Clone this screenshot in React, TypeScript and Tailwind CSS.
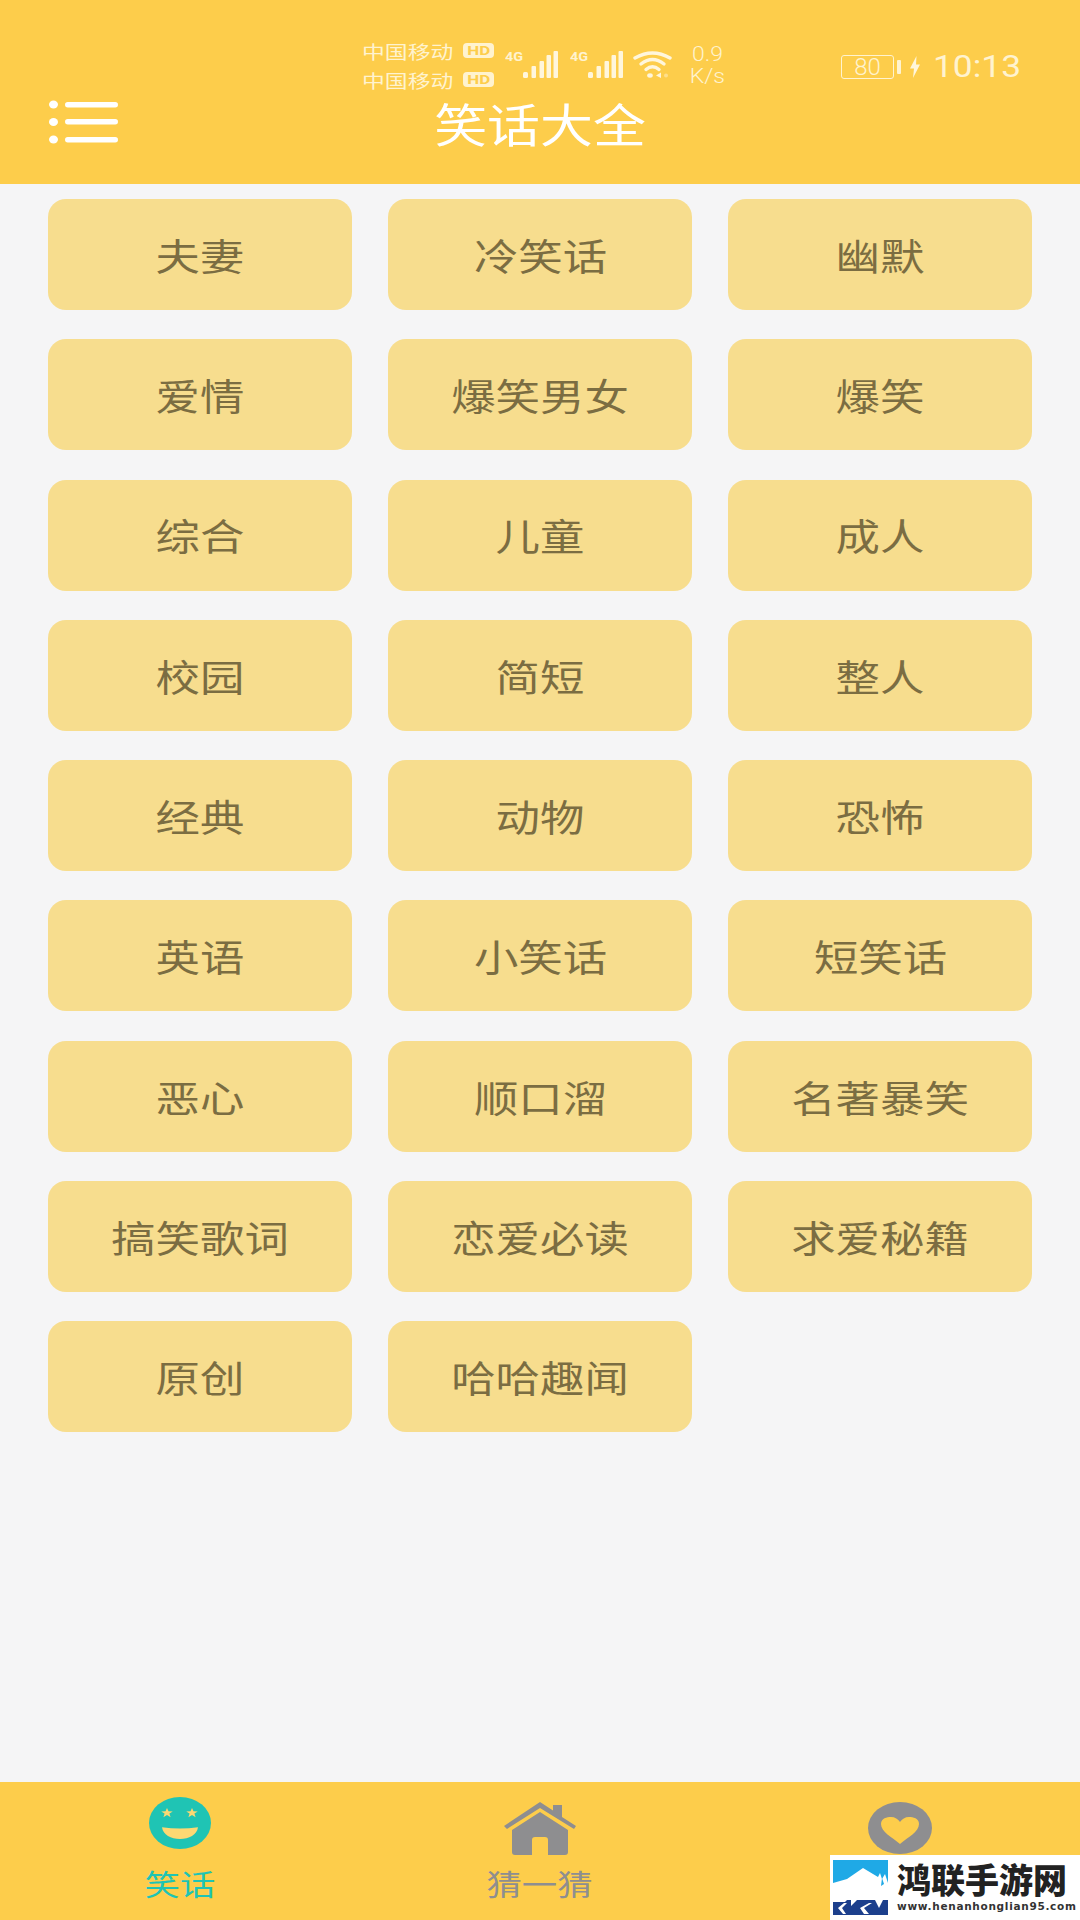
import React from 'react'

const cjk = "font-['Noto_Sans_CJK_SC','Noto_Sans',sans-serif]"

const items = [
  '夫妻', '冷笑话', '幽默',
  '爱情', '爆笑男女', '爆笑',
  '综合', '儿童', '成人',
  '校园', '简短', '整人',
  '经典', '动物', '恐怖',
  '英语', '小笑话', '短笑话',
  '恶心', '顺口溜', '名著暴笑',
  '搞笑歌词', '恋爱必读', '求爱秘籍',
  '原创', '哈哈趣闻',
]

// Signal bars with the small 4G tag
const Signal = () => (
  <div className="flex items-start w-[53px] h-[27px]">
    <span className="block w-[18px] mt-[1px] text-[12px] leading-[11px] font-bold text-[#fff3cf] font-['Roboto',sans-serif] origin-left scale-x-[1.2]">4G</span>
    <svg width="35" height="27" viewBox="0 0 35 27" fill="#fff6dc">
      <rect x="0" y="21" width="5" height="6" rx="1.5" />
      <rect x="8.5" y="15" width="4.5" height="12" rx="1" />
      <rect x="16.5" y="10" width="4.5" height="17" rx="1" />
      <rect x="23.5" y="4" width="4.5" height="23" rx="1" />
      <rect x="30.5" y="0" width="4.5" height="27" rx="1" />
    </svg>
  </div>
)

const Carrier = () => (
  <div className="flex items-center w-[132px] h-[29px]">
    <span className="block w-[93px] text-[18px] leading-none text-[#fff3cf] whitespace-nowrap origin-left scale-x-[1.27]">中国移动</span>
    <span className="flex items-center justify-center ml-[8px] w-[31px] h-[15px] bg-[#fff3cf] text-[#fdcd4b] text-[13px] leading-none font-bold rounded-[4px] font-['Roboto',sans-serif]">
      <span className="block scale-x-[1.3]">HD</span>
    </span>
  </div>
)

const StatusBar = () => (
  <div className="flex items-start pl-[362px] pt-[36px] h-[92px]">
    <div className="flex flex-col">
      <Carrier />
      <Carrier />
    </div>
    <div className="flex items-start ml-[11px] mt-[15px]">
      <Signal />
      <div className="ml-[12px]">
        <Signal />
      </div>
      <svg width="39" height="27" viewBox="0 0 39 27" fill="none" stroke="#fff6dc" strokeWidth="3.4" strokeLinecap="round" className="ml-[10px]">
        <path d="M2 7 Q19.5 -3 37 7" />
        <path d="M8 13 Q19.5 4 31 13" />
        <path d="M13 18.5 Q19.5 13 26 18.5" />
        <ellipse cx="17" cy="24.5" rx="2.8" ry="2.2" fill="#fff6dc" stroke="none" />
        <path d="M23 24.5 L28 21.5 V27 Z" fill="#fff6dc" stroke="none" />
        <circle cx="33" cy="24.5" r="2" fill="#fff6dc" stroke="none" opacity="0.45" />
      </svg>
    </div>
    <div className="flex flex-col items-center w-[35px] ml-[18px] mt-[7px] text-[20px] leading-[22px] text-[#fff3cf] font-['Roboto',sans-serif] font-light">
      <span className="block scale-x-[1.15]">0.9</span>
      <span className="block scale-x-[1.15]">K/s</span>
    </div>
    <div className="flex items-center ml-[116px] mt-[15px]">
      <div className="flex items-center justify-center w-[53px] h-[24px] border-[1.5px] border-[#fff3cf] rounded-[3px] text-[24px] leading-none text-[#fff3cf] font-['Roboto',sans-serif] font-light">80</div>
      <div className="w-[4px] h-[14px] bg-[#fff3cf] ml-[3px] rounded-[1px]" />
      <svg width="10" height="22" viewBox="0 0 10 22" fill="#fff6dc" className="ml-[9px]">
        <path d="M6.5 0 L0 12.5 H4 L3 22 L10 8.5 H6 Z" />
      </svg>
      <span className="block w-[86px] ml-[13px] text-[31px] leading-none text-[#fff3cf] font-['Roboto',sans-serif] whitespace-nowrap origin-left scale-x-[1.14]">10:13</span>
    </div>
  </div>
)

const MenuIcon = () => (
  <svg width="72" height="48" viewBox="0 0 72 48" fill="#fff" className="absolute left-[48px] top-[98px]">
    <ellipse cx="5.5" cy="6.5" rx="4.5" ry="4" />
    <ellipse cx="5.5" cy="24" rx="4.5" ry="4" />
    <ellipse cx="5.5" cy="41.5" rx="4.5" ry="4" />
    <rect x="17" y="4" width="53" height="5.5" rx="2.75" />
    <rect x="17" y="21" width="53" height="5.5" rx="2.75" />
    <rect x="17" y="39" width="53" height="5.5" rx="2.75" />
  </svg>
)

const starPoints = '0,-6 1.5,-2 5.8,-1.8 2.4,0.8 3.6,5 0,2.6 -3.6,5 -2.4,0.8 -5.8,-1.8 -1.5,-2'

const SmileIcon = () => (
  <svg width="62" height="52" viewBox="0 0 62 62" preserveAspectRatio="none">
    <circle cx="31" cy="31" r="31" fill="#1fc4b4" />
    <polygon points={starPoints} transform="translate(18 19)" fill="#fdd873" />
    <polygon points={starPoints} transform="translate(43 19)" fill="#fdd873" />
    <path d="M13 36 Q31 39 49 36 C48 45 40 50 31 50 C22 50 14 45 13 36 Z" fill="#fdd873" />
  </svg>
)

const HomeIcon = () => (
  <svg width="72" height="53" viewBox="0 0 72 53" fill="#8e8e90">
    <path d="M0 24 L36 0 L49 8.5 V3 H58 V15 L72 24 L70 27 L36 6 L3 27 Z" />
    <path d="M8 28 L36 10 L64 28 V50 Q64 53 61 53 H44 V38 Q44 35 41 35 H31 Q28 35 28 38 V53 H11 Q8 53 8 50 Z" />
  </svg>
)

const HeartIcon = () => (
  <svg width="64" height="52" viewBox="0 0 64 52">
    <ellipse cx="32" cy="26" rx="32" ry="26" fill="#8e8e90" />
    <path d="M32 42 C24 35 13 30 13 22 C13 16 19 15 23 15 C27 15 30 17 32 20 C34 17 37 15 41 15 C45 15 51 16 51 22 C51 30 40 35 32 42 Z" fill="#fdcd4b" />
  </svg>
)

const WatermarkLogo = () => (
  <svg width="55" height="55" viewBox="0 0 55 55">
    <rect width="55" height="55" fill="#1fa9e6" />
    <path d="M0 23 L14 19 L30 8 L45 17 L47 13 L49 19 L52 14 L55 23 V40 H0 Z" fill="#fff" />
    <path d="M0 40 H55 V55 H0 Z" fill="#1c3f8c" />
    <path d="M20 30 H44 L50 40 L46 48 L42 40 H24 L18 46 V38 Z" fill="#fff" />
    <path d="M0 40 L8 36 L16 38 L12 42 H0 Z" fill="#fff" />
    <path d="M11 43 L5 48 L10 54 H13 L9 48 L14 43 Z M36 43 L27 48 L31 54 H36 L31 48 L39 43 Z" fill="#fff" />
    <path d="M49 18 L51 24 L48 26 Z" fill="#1fa9e6" />
  </svg>
)

// Watermark that sits over the bottom right corner
const Watermark = () => (
  <div className="absolute right-0 bottom-0 w-[250px] h-[65px] bg-white flex items-start pl-[3px] pt-[5px]">
    <WatermarkLogo />
    <div className="ml-[9px] flex flex-col">
      <span className="text-[34px] leading-[38px] font-black text-[#222] font-['Noto_Sans_CJK_SC',serif] whitespace-nowrap">鸿联手游网</span>
      <span className="text-[10.5px] leading-[14px] mt-[1px] font-bold tracking-[0.7px] text-[#333] font-['DejaVu_Sans',sans-serif] whitespace-nowrap">www.henanhonglian95.com</span>
    </div>
  </div>
)

export default function App() {
  return (
    <div className={`relative w-[1080px] h-[1920px] flex flex-col bg-[#f5f5f6] overflow-hidden ${cjk}`}>
      {/* header */}
      <div className="relative h-[184px] shrink-0 bg-[#fdcd4b]">
        <StatusBar />
        <MenuIcon />
        <div className="text-center text-white text-[46px] leading-[60px]">
          <span className="inline-block scale-x-[1.15]">笑话大全</span>
        </div>
      </div>

      {/* category grid */}
      <div className="flex-1 grid grid-cols-[304px_304px_304px] auto-rows-[111px] gap-x-[36px] gap-y-[29.3px] pl-[48px] pt-[15px] content-start">
        {items.map((item) => (
          <div key={item} className="flex items-center justify-center pt-[2px] rounded-[18px] bg-[#f7dd8e] text-[#7b6d42] text-[37px]">
            <span className="inline-block whitespace-nowrap scale-x-[1.2]">{item}</span>
          </div>
        ))}
      </div>

      {/* bottom tabs */}
      <div className="relative h-[138px] shrink-0 bg-[#fdcd4b] grid grid-cols-3">
        <div className="flex flex-col items-center">
          <div className="h-[81px] pt-[15px]">
            <SmileIcon />
          </div>
          <span className="text-[#1fc4b4] text-[29px] leading-[40px] scale-x-[1.22]">笑话</span>
        </div>
        <div className="flex flex-col items-center">
          <div className="h-[81px] pt-[20px]">
            <HomeIcon />
          </div>
          <span className="text-[#8e8e90] text-[29px] leading-[40px] scale-x-[1.22]">猜一猜</span>
        </div>
        <div className="flex flex-col items-center">
          <div className="h-[81px] pt-[20px]">
            <HeartIcon />
          </div>
        </div>
        <Watermark />
      </div>
    </div>
  )
}
